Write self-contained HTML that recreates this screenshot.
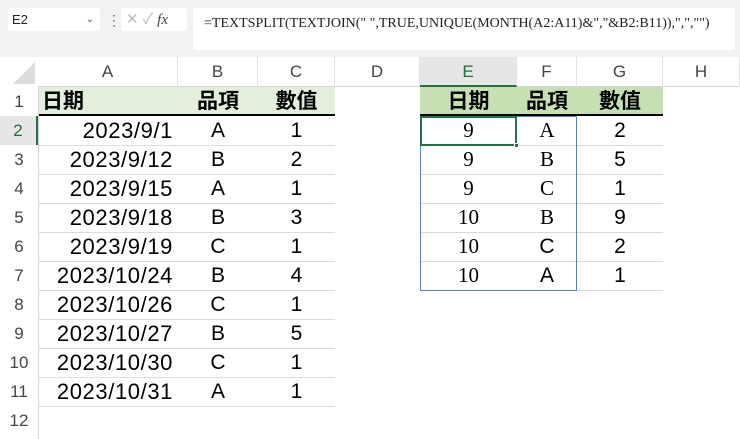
<!DOCTYPE html>
<html><head><meta charset="utf-8"><style>
*{margin:0;padding:0;box-sizing:border-box}
body{width:740px;height:439px;overflow:hidden;background:#fff;font-family:"Liberation Sans","Noto Sans CJK TC",sans-serif;position:relative}
.a{position:absolute}
.c{position:absolute;height:29px;line-height:29px;font-size:21px;color:#000;text-align:center}
.r{text-align:right;padding-right:5px;font-size:22px;letter-spacing:0.6px}
.s{font-family:"Liberation Serif","Noto Serif CJK SC",serif}
.h{position:absolute;top:57px;height:30px;line-height:30px;font-size:17px;color:#444;text-align:center;border-right:1px solid #e1e1e1}
.rn{position:absolute;left:0;width:38px;height:29px;line-height:29px;font-size:17px;color:#444;text-align:center}
.g{position:absolute;left:420px;width:243px;height:1px;background:#d9d9d9}
.k{position:absolute;left:39px;width:296px;height:1px;background:#dcdcdc}
</style></head><body>
<div class="a" style="left:0;top:0;width:740px;height:57px;background:#f3f2f1"></div>
<div class="a" style="left:8px;top:8px;width:92px;height:23px;background:#fff;border-radius:3px;font-size:13px;line-height:23px;padding-left:4px;color:#222">E2<span style="position:absolute;right:6px;font-size:10px;color:#555">&#8964;</span></div>
<div class="a" style="left:107px;top:12px;font-size:14px;color:#666">&#8942;</div>
<div class="a" style="left:121px;top:8px;width:66px;height:23px;background:#fff;border-radius:3px;font-size:15px;line-height:23px;color:#bbb;padding-left:5px">✕ ✓ <i style="color:#444;font-family:'Liberation Serif',serif">fx</i></div>
<div class="a" style="left:193px;top:8px;width:542px;height:42px;background:#fff;border-radius:3px;font-family:'Liberation Serif',serif;font-size:14px;color:#222;padding:8px 0 0 11px;white-space:nowrap">=TEXTSPLIT(TEXTJOIN(" ",TRUE,UNIQUE(MONTH(A2:A11)&amp;","&amp;B2:B11)),",","")</div>
<div class="a" style="left:0;top:57px;width:740px;height:30px;background:#fff;border-bottom:1px solid #d4d4d4"></div>
<div class="a" style="left:0;top:57px;width:38px;height:30px;background:#fff"><div style="position:absolute;right:3px;bottom:3px;width:0;height:0;border-left:22px solid transparent;border-bottom:22px solid #dcdcdc"></div></div>
<div class="h" style="left:38px;width:140px">A</div>
<div class="h" style="left:178px;width:80px">B</div>
<div class="h" style="left:258px;width:77px">C</div>
<div class="h" style="left:335px;width:85px">D</div>
<div class="h" style="left:420px;width:97px;background:#e6e6e6;color:#1e6b3c;border-bottom:2px solid #217346">E</div>
<div class="h" style="left:517px;width:60px">F</div>
<div class="h" style="left:577px;width:86px">G</div>
<div class="h" style="left:663px;width:77px">H</div>
<div class="a" style="left:38px;top:87px;width:1px;height:352px;background:#d4d4d4"></div>
<div class="rn" style="top:87px">1</div><div class="rn" style="top:116px;color:#1e6b3c;background:#e6e6e6;border-right:2px solid #217346">2</div><div class="rn" style="top:145px">3</div><div class="rn" style="top:174px">4</div><div class="rn" style="top:203px">5</div><div class="rn" style="top:232px">6</div><div class="rn" style="top:261px">7</div><div class="rn" style="top:290px">8</div><div class="rn" style="top:319px">9</div><div class="rn" style="top:348px">10</div><div class="rn" style="top:377px">11</div><div class="rn" style="top:406px">12</div>
<div class="k" style="top:145px"></div><div class="k" style="top:174px"></div><div class="k" style="top:203px"></div><div class="k" style="top:232px"></div><div class="k" style="top:261px"></div><div class="k" style="top:290px"></div><div class="k" style="top:319px"></div><div class="k" style="top:348px"></div><div class="k" style="top:377px"></div><div class="k" style="top:406px"></div>
<div class="a" style="left:39px;top:87px;width:296px;height:29px;background:#e2efda;border-bottom:2px solid #000"></div>
<div class="c" style="left:42px;top:87px;font-weight:bold;text-align:left">日期</div>
<div class="c" style="left:178px;top:87px;width:80px;font-weight:bold">品項</div>
<div class="c" style="left:258px;top:87px;width:77px;font-weight:bold">數值</div>
<div class="a" style="left:420px;top:87px;width:243px;height:29px;background:#c6e0b4;border-bottom:2px solid #000"></div>
<div class="c" style="left:420px;top:87px;width:97px;font-weight:bold">日期</div>
<div class="c" style="left:517px;top:87px;width:60px;font-weight:bold">品項</div>
<div class="c" style="left:577px;top:87px;width:86px;font-weight:bold">數值</div>
<div class="c r" style="left:38px;top:116px;width:140px">2023/9/1</div><div class="c" style="left:178px;top:116px;width:80px">A</div><div class="c" style="left:258px;top:116px;width:77px">1</div>
<div class="c r" style="left:38px;top:145px;width:140px">2023/9/12</div><div class="c" style="left:178px;top:145px;width:80px">B</div><div class="c" style="left:258px;top:145px;width:77px">2</div>
<div class="c r" style="left:38px;top:174px;width:140px">2023/9/15</div><div class="c" style="left:178px;top:174px;width:80px">A</div><div class="c" style="left:258px;top:174px;width:77px">1</div>
<div class="c r" style="left:38px;top:203px;width:140px">2023/9/18</div><div class="c" style="left:178px;top:203px;width:80px">B</div><div class="c" style="left:258px;top:203px;width:77px">3</div>
<div class="c r" style="left:38px;top:232px;width:140px">2023/9/19</div><div class="c" style="left:178px;top:232px;width:80px">C</div><div class="c" style="left:258px;top:232px;width:77px">1</div>
<div class="c r" style="left:38px;top:261px;width:140px">2023/10/24</div><div class="c" style="left:178px;top:261px;width:80px">B</div><div class="c" style="left:258px;top:261px;width:77px">4</div>
<div class="c r" style="left:38px;top:290px;width:140px">2023/10/26</div><div class="c" style="left:178px;top:290px;width:80px">C</div><div class="c" style="left:258px;top:290px;width:77px">1</div>
<div class="c r" style="left:38px;top:319px;width:140px">2023/10/27</div><div class="c" style="left:178px;top:319px;width:80px">B</div><div class="c" style="left:258px;top:319px;width:77px">5</div>
<div class="c r" style="left:38px;top:348px;width:140px">2023/10/30</div><div class="c" style="left:178px;top:348px;width:80px">C</div><div class="c" style="left:258px;top:348px;width:77px">1</div>
<div class="c r" style="left:38px;top:377px;width:140px">2023/10/31</div><div class="c" style="left:178px;top:377px;width:80px">A</div><div class="c" style="left:258px;top:377px;width:77px">1</div>
<div class="g" style="top:145px"></div><div class="g" style="top:174px"></div><div class="g" style="top:203px"></div><div class="g" style="top:232px"></div><div class="g" style="top:261px"></div><div class="g" style="top:290px"></div>
<div class="c s" style="left:420px;top:116px;width:97px">9</div><div class="c s" style="left:517px;top:116px;width:60px">A</div><div class="c" style="left:577px;top:116px;width:86px">2</div>
<div class="c s" style="left:420px;top:145px;width:97px">9</div><div class="c s" style="left:517px;top:145px;width:60px">B</div><div class="c" style="left:577px;top:145px;width:86px">5</div>
<div class="c s" style="left:420px;top:174px;width:97px">9</div><div class="c s" style="left:517px;top:174px;width:60px">C</div><div class="c" style="left:577px;top:174px;width:86px">1</div>
<div class="c s" style="left:420px;top:203px;width:97px">10</div><div class="c s" style="left:517px;top:203px;width:60px">B</div><div class="c" style="left:577px;top:203px;width:86px">9</div>
<div class="c s" style="left:420px;top:232px;width:97px">10</div><div class="c" style="left:517px;top:232px;width:60px">C</div><div class="c" style="left:577px;top:232px;width:86px">2</div>
<div class="c s" style="left:420px;top:261px;width:97px">10</div><div class="c" style="left:517px;top:261px;width:60px">A</div><div class="c" style="left:577px;top:261px;width:86px">1</div>
<div class="a" style="left:420px;top:116px;width:157px;height:175px;border:1px solid #5b7fc4"></div>
<div class="a" style="left:420px;top:116px;width:97px;height:30px;border:2px solid #217346"></div>
<div class="a" style="left:514px;top:143px;width:5px;height:5px;background:#217346;border:1px solid #fff"></div>
</body></html>
